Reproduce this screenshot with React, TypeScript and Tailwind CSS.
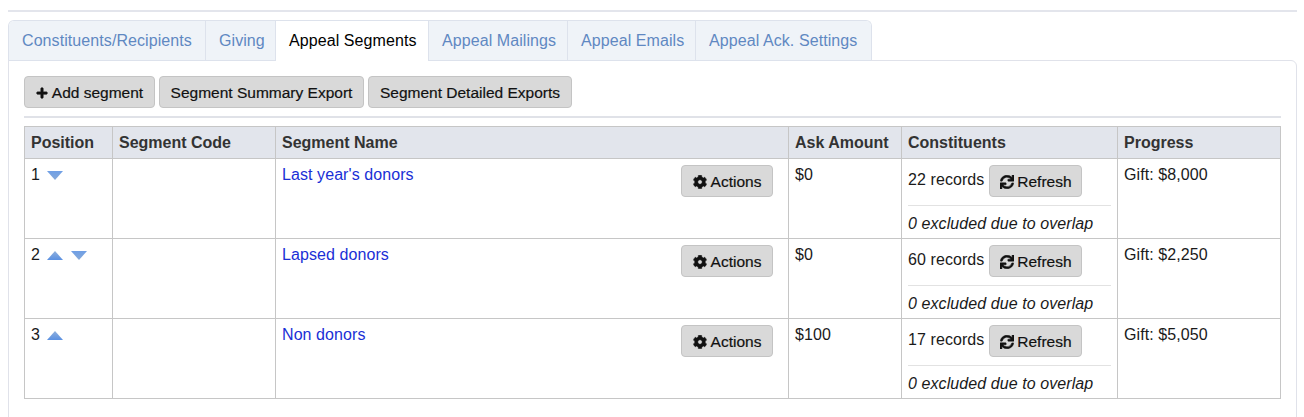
import React from "react";
import { FaPlus, FaCog, FaSync } from "react-icons/fa";

const btn =
  "inline-flex items-center justify-center h-8 rounded-[4px] border border-[#c4c4c4] bg-[#d9d9d9] pt-[1px] text-[15.5px] tracking-normal font-medium text-[#111] [-webkit-text-stroke:0.2px_#111]";

function Tri({ dir }: { dir: "up" | "down" }) {
  const id = dir === "up" ? "triUp" : "triDown";
  return (
    <svg width="16" height="9" viewBox="0 0 16 9" className="inline-block shrink-0">
      <defs>
        <linearGradient id={id} x1="0" y1="0" x2="0" y2="1">
          <stop offset="0" stopColor={dir === "up" ? "#8fb0dc" : "#6f9fe6"} />
          <stop offset="1" stopColor={dir === "up" ? "#5a90e2" : "#86a9d8"} />
        </linearGradient>
      </defs>
      <polygon points={dir === "up" ? "8,0 16,9 0,9" : "0,0 16,0 8,9"} fill={`url(#${id})`} />
    </svg>
  );
}

const tabs = [
  { t: "Constituents/Recipients", w: "w-[197px]" },
  { t: "Giving", w: "w-[70px]" },
  { t: "Appeal Segments", w: "w-[153px]" },
  { t: "Appeal Mailings", w: "w-[139px]" },
  { t: "Appeal Emails", w: "w-[128px]" },
  { t: "Appeal Ack. Settings", w: "w-[175px]" },
];
const rows = [
  { p: 1, up: false, down: true, name: "Last year's donors", ask: "$0", rec: 22, gift: "$8,000" },
  { p: 2, up: true, down: true, name: "Lapsed donors", ask: "$0", rec: 60, gift: "$2,250" },
  { p: 3, up: true, down: false, name: "Non donors", ask: "$100", rec: 17, gift: "$5,050" },
];

const th = "border border-[#c6c6c6] px-[6px] text-left align-middle font-bold tracking-normal text-[#333] text-[16px]";
const td = "border border-[#c6c6c6] align-top px-[6px] pt-[6px] text-[16px] leading-[20px] text-[#1a1a1a]";

export default function App() {
  return (
    <div className="h-[417px] overflow-hidden bg-white px-2 pt-[10px] tracking-[0.08px] font-['Liberation_Sans',Arial,sans-serif]">
      <div className="h-[2px] w-[1289px] bg-[#e3e5ec]" />
      <div className="mt-2 flex h-[41px] w-fit overflow-hidden rounded-t-[6px] border border-b-0 border-[#dde2ec]">
        {tabs.map(({ t, w }, i) => (
          <div
            key={t}
            className={
              "flex items-center pl-[13px] text-[16px] " +
              w +
              " " +
              (i === 2
                ? "bg-white text-black"
                : "border-b border-[#dde2ec] bg-[#eff3f8] text-[#5f88c2]") +
              (i < tabs.length - 1 ? " border-r border-r-[#dde2ec]" : "")
            }
          >
            {t}
          </div>
        ))}
      </div>
      <div className="-mt-px w-[1289px] rounded-tr-[6px] border border-[#e0e2ea] px-[15px] pt-[15px] pb-[30px]">
        <div className="flex gap-1">
          <button className={btn + " w-[131px]"}>
            <FaPlus className="mr-[4px] text-[12px] stroke-[30px]" />
            Add segment
          </button>
          <button className={btn + " w-[205px]"}>Segment Summary Export</button>
          <button className={btn + " w-[204px]"}>Segment Detailed Exports</button>
        </div>
        <div className="mt-2 h-[2px] w-[1257px] bg-[#e0e2e8]" />
        <table className="mt-2 w-[1256px] table-fixed border-collapse">
          <colgroup>
            <col className="w-[88px]" />
            <col className="w-[163px]" />
            <col className="w-[513px]" />
            <col className="w-[113px]" />
            <col className="w-[216px]" />
            <col className="w-[163px]" />
          </colgroup>
          <thead>
            <tr className="h-8 bg-[#e2e5ec]">
              <th className={th}>Position</th>
              <th className={th}>Segment Code</th>
              <th className={th}>Segment Name</th>
              <th className={th}>Ask Amount</th>
              <th className={th}>Constituents</th>
              <th className={th}>Progress</th>
            </tr>
          </thead>
          <tbody>
            {rows.map((r) => (
              <tr key={r.p} className="h-20">
                <td className={td}>
                  <div className="flex items-center gap-[8px]">
                    <span className="-mr-px">{r.p}</span>
                    {r.up && <Tri dir="up" />}
                    {r.down && <Tri dir="down" />}
                  </div>
                </td>
                <td className={td} />
                <td className={td}>
                  <div className="flex justify-between pr-[9px]">
                    <a className="text-[#1a2fd6]">{r.name}</a>
                    <button className={btn + " w-[92px]"}>
                      <FaCog className="mr-[4px] text-[14px] stroke-[20px]" />
                      Actions
                    </button>
                  </div>
                </td>
                <td className={td}>{r.ask}</td>
                <td className={td}>
                  <div className="flex items-start">
                    <span className="mt-[5px]">{r.rec} records</span>
                    <button className={btn + " ml-[5px] w-[93px]"}>
                      <FaSync className="mr-[3px] text-[14px] stroke-[20px]" />
                      Refresh
                    </button>
                  </div>
                  <div className="mt-2 border-t border-[#e2e2e2] pt-[8px] italic">0 excluded due to overlap</div>
                </td>
                <td className={td}>Gift: {r.gift}</td>
              </tr>
            ))}
          </tbody>
        </table>
      </div>
    </div>
  );
}
